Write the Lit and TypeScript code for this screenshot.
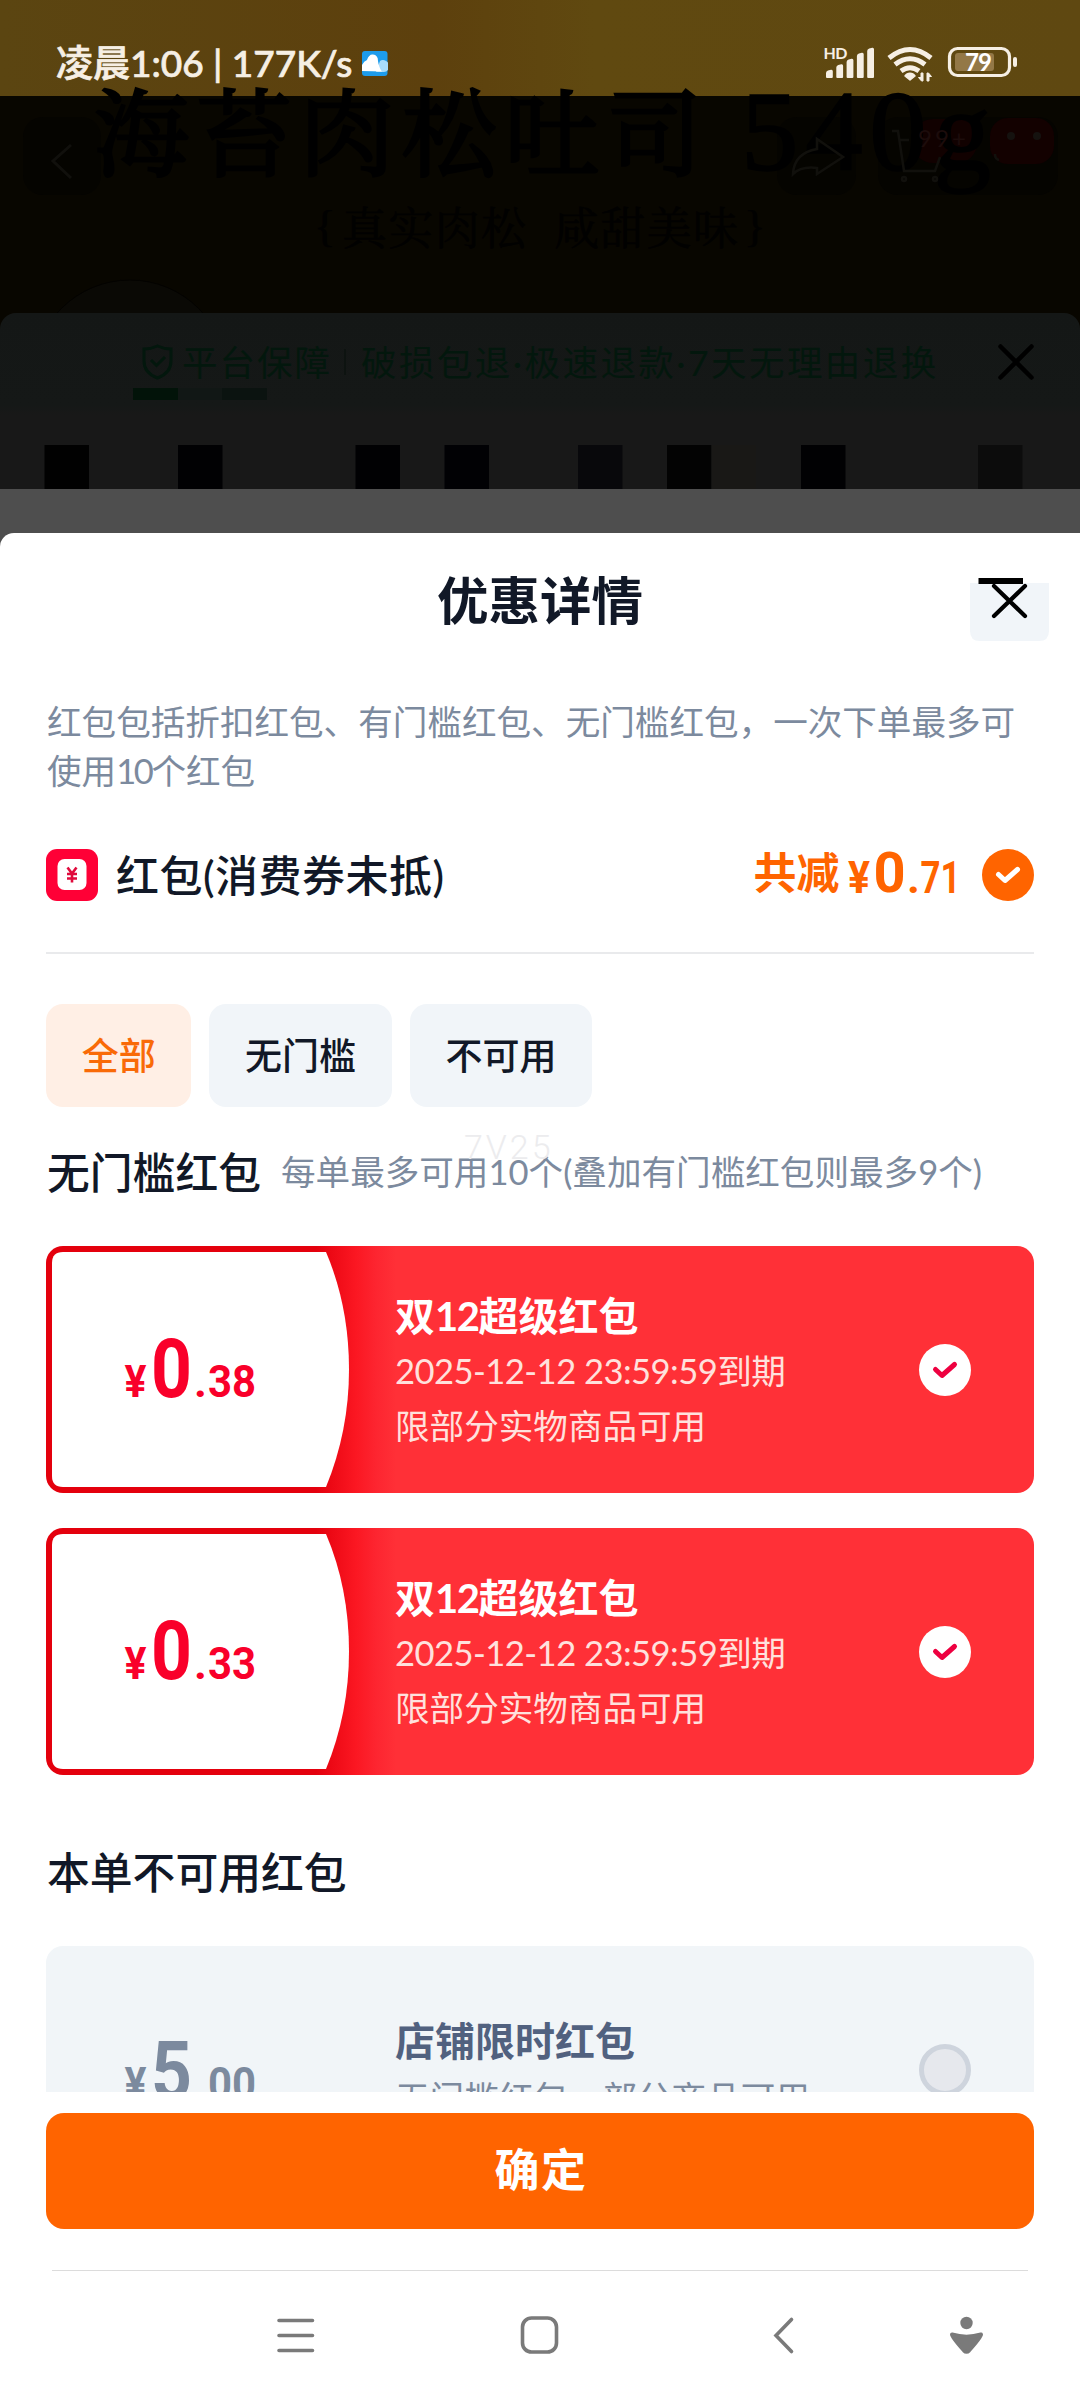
import { LitElement, html, css, svg } from "lit";
import { customElement, property } from "lit/decorators.js";

const FONT = css`"Lato", "Noto Sans CJK SC", sans-serif`;

@customElement("price-tag")
class PriceTag extends LitElement {
  @property() whole = "0";
  @property() cents = "00";
  static styles = css`
    :host { display: block; }
    svg { display: block; overflow: visible; fill: currentColor; font-family: Roboto, sans-serif; font-weight: 700; }
    .small { font-size: 44.5px; }
    .big { font-size: 81px; }
    .yen { font-size: 44.5px; }
  `;
  render() {
    return html`<svg width="132" height="60" viewBox="0 0 132 60">
      <text class="yen" x="-0.5" y="58" textLength="22" lengthAdjust="spacingAndGlyphs">¥</text>
      <text class="big" x="26" y="58" textLength="41" lengthAdjust="spacingAndGlyphs">${this.whole}</text>
      <text class="small" x="69" y="58">.</text>
      <text class="small" x="83" y="58" textLength="48" lengthAdjust="spacingAndGlyphs">${this.cents}</text>
    </svg>`;
  }
}

@customElement("coupon-card")
class CouponCard extends LitElement {
  @property() cents = "";
  static styles = css`
    :host { display: block; }
    .card { position: relative; display: grid; grid-template-columns: 349px 1fr 52px; box-sizing: border-box; width: 988px; height: 247px; border-radius: 17px; overflow: hidden; background: linear-gradient(90deg, #e4000d 0, #e4000d 270px, #fb1722 310px, #fd2530 330px, #ff3037 350px); padding-right: 63.5px; align-items: center; }
    .bg { position: absolute; left: 0; top: 0; }
    .price { position: relative; margin: 0 0 1px 79px; color: #f9002a; }
    .info { position: relative; display: flex; flex-direction: column; font-family: ${FONT}; color: #ffe1dd; padding-top: 2px; }
    .name { font-size: 40px; line-height: 54px; font-weight: 700; color: #fff; white-space: nowrap; }
    .digits { letter-spacing: -1.5px; }
    .line { font-size: 34.6px; line-height: 55px; white-space: nowrap; }
    .date { letter-spacing: -0.55px; }
  `;
  render() {
    return html`<div class="card">
      <svg class="bg" width="320" height="247" viewBox="0 0 320 247">
        <path d="M17 6H280Q303 60 303 123.500Q303 185 280 241H17Q6 241 6 230V17Q6 6 17 6Z" fill="#fff" />
      </svg>
      <price-tag class="price" whole="0" cents=${this.cents}></price-tag>
      <div class="info">
        <div class="name">双<span class="digits">12</span>超级红包</div>
        <div class="line date">2025-12-12 23:59:59到期</div>
        <div class="line">限部分实物商品可用</div>
      </div>
      <svg width="52" height="52" viewBox="0 0 52 52">
        <circle cx="26" cy="26" r="26" fill="#fff" />
        <path d="M16.500 25.500 23 31.500 35.500 20.500" fill="none" stroke="#ee0040" stroke-width="5" stroke-linecap="round" stroke-linejoin="round" />
      </svg>
    </div>`;
  }
}

@customElement("app-root")
class AppRoot extends LitElement {
  static styles = css`
    :host { display: block; width: 1080px; height: 2400px; overflow: hidden; background: #fff; font-family: ${FONT}; color: #111827; }
    svg { display: block; flex: none; }
    .phone { display: flex; flex-direction: column; width: 1080px; height: 2400px; overflow: hidden; position: relative; }
    .status { box-sizing: border-box; height: 96px; background: linear-gradient(90deg, #5b4511 0, #5d400d 40%, #604910 55%, #5f4811 100%); display: flex; align-items: center; padding: 30px 62px 0 56px; color: #f6efe4; }
    .clock { font-size: 37px; font-weight: 500; line-height: 50px; white-space: nowrap; width: 306px; -webkit-text-stroke: 0.7px #f6efe4; }
    .spacer { flex: 1; }
    .icons { overflow: visible; }
    .shade { height: 217px; background: #080600; }
    .ghost { position: absolute; left: 0; top: 0; }
    .under { height: 176px; box-sizing: border-box; background: linear-gradient(#141716 0, #151817 92px, #181818 102px); border-radius: 16px 16px 0 0; overflow: hidden; }
    .corner { background: #080600; }
    .corner-light { background: #4e4e4e; }
    .promise { display: flex; align-items: center; height: 98px; box-sizing: border-box; padding: 0 46px 0 142px; color: #03170d; font-size: 35.500px; white-space: nowrap; }
    .shield { margin-right: 9px; }
    .promise-name { letter-spacing: 2px; margin-top: -3px; }
    .promise-text { letter-spacing: 2.450px; margin-top: -3px; }
    .bar { width: 2px; height: 26px; background: #0d1310; margin: 0 15px 0 12px; }
    .promise .x { margin-left: auto; }
    .mosaic { display: block; margin-top: -23px; }
    .gap { height: 44px; background: #4e4e4e; }
    .sheet { flex: none; background: #fff; border-radius: 14px 0 0 0; height: 1559px; overflow: hidden; box-sizing: border-box; padding: 0 46px; }
    .head { display: flex; position: relative; justify-content: center; height: 140px; }
    .title { font-size: 51.500px; font-weight: 600; line-height: 60px; margin-top: 37px; }
    .close { position: absolute; right: -15px; top: 44px; }
    .desc { font-size: 34.600px; line-height: 49px; color: #7c8a9e; margin: 24px 0 0 1px; height: 98px; width: 987px; white-space: nowrap; }
    .ten { letter-spacing: -2.400px; }
    .sum { display: flex; align-items: center; height: 52px; margin-top: 54px; }
    .sum-name { font-size: 43px; font-weight: 500; margin: 2px 0 0 18px; flex: 1; line-height: 52px; white-space: nowrap; letter-spacing: 0.500px; }
    .total { color: #ff6400; fill: #ff6400; font-weight: 700; overflow: visible; margin-right: 26px; }
    .cn { font-size: 43px; font-weight: 700; }
    .num { font-family: Roboto, sans-serif; font-weight: 700; }
    .rule { height: 2px; background: #e9eaec; margin-top: 51px; }
    .tabs { display: flex; gap: 18px; margin-top: 50px; }
    .tab { height: 103px; line-height: 103px; padding: 0 35.700px; border-radius: 17px; background: #f1f5f9; font-size: 37px; font-weight: 500; white-space: nowrap; }
    .on { background: #ffefe5; color: #f96a07; }
    .section { display: flex; align-items: center; height: 60px; margin: 33px 0 0 1px; white-space: nowrap; position: relative; }
    .section-name { font-size: 42.800px; font-weight: 500; }
    .note { font-size: 34.600px; color: #7c8a9e; margin-left: 20px; }
    .list { display: flex; flex-direction: column; gap: 35px; margin-top: 46px; }
    .mark { position: absolute; left: 417px; top: -11px; font-family: Roboto, sans-serif; font-size: 34px; font-weight: 300; letter-spacing: 3px; line-height: 36px; color: #ececee; }
    .off-title { font-size: 42.800px; font-weight: 500; line-height: 60px; margin: 68px 0 0 1px; }
    .off { display: grid; grid-template-columns: 349px 1fr 52px; align-items: start; height: 247px; background: #f1f5f8; border-radius: 17px; margin-top: 43px; padding-right: 63.500px; color: #7c8a9e; }
    .off-price { margin: 94.500px 0 0 79px; }
    .off-name { font-size: 40px; font-weight: 600; color: #51617f; line-height: 54px; margin-top: 68px; }
    .off-sub { font-size: 34.600px; line-height: 59px; white-space: nowrap; }
    .off svg { margin-top: 98px; }
    .footer { padding: 21px 46px 0; background: #fff; }
    .ok { height: 116px; border-radius: 18px; background: #ff6400; color: #fff; font-size: 45px; font-weight: 700; text-align: center; line-height: 114px; letter-spacing: 1.500px; text-indent: 2px; }
    .foot-rule { height: 1px; background: #dcdcdc; margin: 41px 6px 0; }
  `;

  private status() {
    const tops = [71, 65.5, 60, 54, 49];
    return html`<div class="status">
      <div class="clock">凌晨1:06 | 177K/s</div>
      <svg width="26" height="25" viewBox="0 0 26 25">
        <rect width="25.500" height="25" rx="3" fill="#1d9cec" />
        <path d="M18 10a6 6 0 1 1 2 11H14Z" fill="#a9dcfb" />
        <path d="M0 20V14Q2 10 5 9Q7 3 11 3.500Q16 4 16 10Q17 17 20 20.500Z" fill="#fff" />
      </svg>
      <div class="spacer"></div>
      <svg class="icons" width="194" height="36" viewBox="825 46 194 36">
        <g fill="#f6efe4">
          <text x="824.5" y="60" font-family="Lato" font-size="16" font-weight="700" textLength="24">HD</text>
          ${tops.map((t, i) => svg`<path d="M${827 + i * 10.3} 78V${t + 3}q0-2 2-2.500l3-.8q1.800-.3 1.800 1.500V78q0 1-1 1h-4.800q-1 0-1-1Z" />`)}
          <path d="M906 77a6 6 0 0 1 10 0L911 81Z" stroke="#f6efe4" stroke-width="1.500" stroke-linejoin="round" />
          <path d="M924 74v8h-1.500l-3-3.500h2.500V74ZM928 82v-8h1.500l3 3.500H930V82Z" stroke="#f6efe4" stroke-width="1" />
        </g>
        <g fill="none" stroke="#f6efe4" stroke-width="5">
          <path d="M890 59q21-17 42 0" /><path d="M896 65.500q15-11.500 30 0" /><path d="M902 72q9-6.500 18 0" />
          <rect x="950.500" y="49.500" width="60" height="27" rx="8" stroke-width="3.200" />
        </g>
        <rect x="956" y="54" width="39" height="18" rx="3" fill="#937847" />
        <rect x="1014" y="58" width="4" height="10" rx="2" fill="#f6efe4" />
        <text x="966" y="71.500" fill="#fff" font-family="Lato" font-size="24" font-weight="700" textLength="27">79</text>
      </svg>
    </div>`;
  }

  private ghost() {
    return html`<svg class="ghost" width="1080" height="313" viewBox="0 0 1080 313">
      <g fill="#050400">
        <rect x="23" y="117" width="78" height="78" rx="20" />
        <rect x="777" y="117" width="79" height="78" rx="20" />
        <rect x="878" y="117" width="180" height="78" rx="20" />
      </g>
      <circle cx="130" cy="377" r="97" fill="#0a0905" stroke="#030200" />
      <rect x="913" y="119" width="64" height="44" rx="20" fill="#110100" />
      <rect x="990" y="118" width="64" height="46" rx="18" fill="#130100" />
      <g fill="#000" stroke="#000" font-family="'Noto Serif CJK SC','Liberation Serif','Noto Sans CJK SC',serif">
        <text x="94" y="169" font-size="95" stroke-width="3" textLength="608">海苔肉松吐司</text>
        <text x="741" y="170" font-family="Liberation Serif" font-size="115" stroke-width="1.500" textLength="250">540g</text>
        <g opacity=".8" font-size="45" stroke-width=".4">
          <text x="314" y="241" font-family="Liberation Serif">{</text>
          <text x="342" y="245" textLength="184">真实肉松</text>
          <text x="554" y="245" textLength="184">咸甜美味</text>
          <text x="744" y="241" font-family="Liberation Serif">}</text>
        </g>
      </g>
      <g fill="none" stroke="#11100c" stroke-width="2.500">
        <path d="M71 145 53 161 71 178" stroke-width="3" />
        <path d="M817 139 843 157 817 174V168Q801 166 793 174Q794 153 817 149Z" />
        <path d="M892 131h6l6 40h31l5-14M900 140h9" />
        <circle cx="904" cy="179" r="2" /><circle cx="935" cy="179" r="2" />
        <path d="M995 154q0 5 4 6" />
      </g>
      <text x="918" y="147" font-family="Lato" font-size="24" fill="#1c0c0b" textLength="48">99+</text>
      <circle cx="1011" cy="136" r="4" fill="#15120f" /><circle cx="1037" cy="136" r="4" fill="#15120f" />
    </svg>`;
  }

  private under() {
    const cells: [number, string][] = [[44.500, "#010101"], [178, "#010103"], [355.500, "#010103"], [444.500, "#010104"], [578, "#08080b"], [667, "#030303"], [711.500, "#191816"], [801, "#010103"], [978, "#0c0c0c"]];
    return html`<div class="corner"><div class="under">
      <div class="promise">
        <svg class="shield" width="31" height="36" viewBox="0 0 31 36" fill="none" stroke="#03170d" stroke-width="3">
          <path d="M15.500 2Q22 5 29 5V17Q29 29 15.500 34Q2 29 2 17V5Q9 5 15.500 2Z" /><path d="M9 16 14.500 21.500 23 13" />
        </svg>
        <span class="promise-name">平台保障</span><span class="bar"></span><span class="promise-text">破损包退·极速退款·7天无理由退换</span>
        <svg class="x" width="36" height="36" viewBox="0 0 36 36"><path d="M2.500 2.500 33.500 33.500M33.500 2.500 2.500 33.500" stroke="#000" stroke-width="4.500" stroke-linecap="round" /></svg>
      </div>
      <svg class="mosaic" width="1080" height="101" viewBox="0 388 1080 101">
        <rect x="133" y="388" width="45" height="12" fill="#021309" />
        <rect x="178" y="388" width="44.500" height="12" fill="#111715" />
        <rect x="222" y="388" width="45" height="12" fill="#0b1310" />
        ${cells.map(([x, c]) => svg`<rect x=${x} y="445" width="44.500" height="44" fill=${c} />`)}
      </svg>
    </div></div>
    <div class="gap"></div>`;
  }

  render() {
    return html`<div class="phone">
      ${this.status()}
      <div class="shade"></div>
      ${this.ghost()}
      ${this.under()}
      <div class="corner-light"><div class="sheet">
        <div class="head">
          <div class="title">优惠详情</div>
          <svg class="close" width="79" height="64" viewBox="970 577 79 64">
            <path d="M970 583H1049V631Q1049 641 1039 641H980Q970 641 970 631Z" fill="#f1f5f9" />
            <rect x="978.500" y="578" width="44.500" height="6" fill="#000" />
            <path d="M994 586 1025 616M1025 586 994 616" stroke="#000" stroke-width="4.200" stroke-linecap="round" />
          </svg>
        </div>
        <div class="desc">红包包括折扣红包、有门槛红包、无门槛红包，一次下单最多可<br />使用<span class="ten">10</span>个红包</div>
        <div class="sum">
          <svg width="52" height="52" viewBox="0 0 52 52">
            <rect width="52" height="52" rx="11" fill="#ff0036" /><rect x="11.500" y="10" width="29" height="31" rx="7" fill="#fff" />
            <path d="M21.500 18.500 26 24.500 30.500 18.500M26 24V33.500M21 25H31M21 29.500H31" fill="none" stroke="#e00a3c" stroke-width="2.600" />
          </svg>
          <div class="sum-name">红包(消费券未抵)</div>
          <svg class="total" width="202" height="52" viewBox="754 849 202 52">
            <text class="cn" x="753.500" y="888.500">共减</text>
            <text class="num" x="848" y="892.500" font-size="44.500" textLength="22" lengthAdjust="spacingAndGlyphs">¥</text>
            <text class="num" x="873.500" y="892" font-size="56">0</text>
            <text class="num" x="907" y="892.500" font-size="44.500">.</text>
            <text class="num" x="920.500" y="892.500" font-size="44.500" textLength="40" lengthAdjust="spacingAndGlyphs">71</text>
          </svg>
          <svg width="52" height="52" viewBox="0 0 52 52"><circle cx="26" cy="26" r="26" fill="#ff6400" /><path d="M16.500 25.500 23 31.500 35.500 20.500" fill="none" stroke="#fff" stroke-width="5" stroke-linecap="round" stroke-linejoin="round" /></svg>
        </div>
        <div class="rule"></div>
        <div class="tabs"><div class="tab on">全部</div><div class="tab">无门槛</div><div class="tab">不可用</div></div>
        <div class="section">
          <div class="mark">7V25</div>
          <div class="section-name">无门槛红包</div><div class="note">每单最多可用10个(叠加有门槛红包则最多9个)</div>
        </div>
        <div class="list"><coupon-card cents="38"></coupon-card><coupon-card cents="33"></coupon-card></div>
        <div class="off-title">本单不可用红包</div>
        <div class="off">
          <price-tag class="off-price" whole="5" cents="00"></price-tag>
          <div><div class="off-name">店铺限时红包</div><div class="off-sub">无门槛红包，部分商品可用</div></div>
          <svg width="52" height="52" viewBox="0 0 52 52"><circle cx="26" cy="26" r="23.500" fill="#e6e8ed" stroke="#ced4dd" stroke-width="5" /></svg>
        </div>
      </div></div>
      <div class="footer"><div class="ok">确定</div><div class="foot-rule"></div></div>
      <svg width="1080" height="129" viewBox="0 2271 1080 129" fill="none" stroke="#7a7a7a" stroke-width="3.600" stroke-linecap="round">
        <path d="M279 2320.500H312.500M279 2335.500H312.500M279 2350.500H312.500" />
        <rect x="522.500" y="2318" width="34" height="34" rx="9" />
        <path d="M791.500 2319.500 776 2335.500 791.500 2351.500" />
        <circle cx="966.500" cy="2323" r="6.200" fill="#7a7a7a" stroke="none" />
        <path d="M952 2334.500Q966.500 2339 981 2334.500Q981 2337 969 2350.500Q966.500 2353 964 2350.500Q952 2337 952 2334.500Z" fill="#7a7a7a" stroke-linejoin="round" stroke-width="4" />
      </svg>
    </div>`;
  }
}
